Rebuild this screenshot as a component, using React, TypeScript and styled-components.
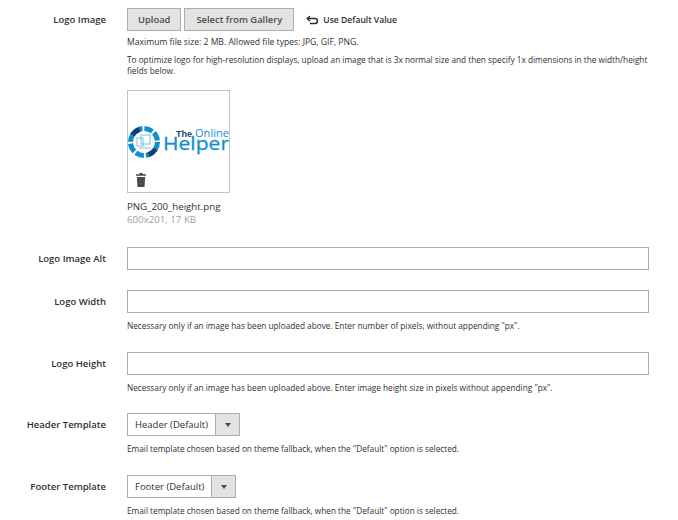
import React from "react";
import styled, { createGlobalStyle } from "styled-components";

const Global = createGlobalStyle`
  html, body { margin: 0; padding: 0; background: #fff; }
  body { font-family: "Open Sans", sans-serif; color: #303030; overflow: hidden; }
  * { box-sizing: border-box; }
`;

const Page = styled.div`
  width: 678px;
  height: 520px;
  padding-top: 8px;
  display: flex;
  flex-direction: column;
  overflow: hidden;
`;

const Row = styled.div<{ $mb: number }>`
  display: grid;
  grid-template-columns: 106px 522px;
  column-gap: 21px;
  margin-bottom: ${(p) => p.$mb}px;
`;

const Label = styled.label`
  font-size: 9.5px;
  font-weight: 600;
  line-height: 14px;
  text-align: right;
  padding-top: 5px;
  color: #303030;
  white-space: nowrap;
`;

const Control = styled.div`
  display: flex;
  flex-direction: column;
  min-width: 0;
`;

const Actions = styled.div`
  display: flex;
  align-items: center;
  height: 23px;
  gap: 3px;
`;

const Button = styled.button<{ $pad: number }>`
  height: 23px;
  padding: 0 ${(p) => p.$pad}px;
  font-family: inherit;
  font-size: 9.4px;
  font-weight: 600;
  color: #514943;
  background: #e3e3e3;
  border: 1px solid #adadad;
  border-radius: 0;
  white-space: nowrap;
`;

const UseDefault = styled.span`
  display: inline-flex;
  align-items: center;
  gap: 4px;
  margin-left: 9px;
  font-size: 8.6px;
  font-weight: 600;
  color: #303030;
  white-space: nowrap;
`;

const Note = styled.p<{ $mt?: number; $size?: number }>`
  margin: ${(p) => p.$mt ?? 0}px 0 0;
  font-size: ${(p) => p.$size ?? 8.25}px;
  line-height: 11px;
  color: #303030;
`;

const Preview = styled.div`
  position: relative;
  width: 103px;
  height: 103px;
  margin-top: 14px;
  border: 1px solid #c4c4c4;
  background: #fff;
  display: flex;
  align-items: center;
`;

const LogoArt = styled.svg`
  display: block;
  width: 101px;
  height: 34px;
`;

const Trash = styled.svg`
  position: absolute;
  left: 8px;
  bottom: 5px;
  width: 10px;
  height: 14px;
`;

const FileName = styled.div`
  margin-top: 8px;
  font-size: 9.7px;
  line-height: 12px;
  color: #303030;
`;

const FileMeta = styled.div`
  margin-top: 1px;
  font-size: 9.7px;
  line-height: 12px;
  color: #a0a0a0;
`;

const Input = styled.input`
  display: block;
  width: 522px;
  height: 23px;
  border: 1px solid #adadad;
  background: #fff;
  padding: 0 7px;
  border-radius: 0;
  outline: none;
`;

const Select = styled.div`
  display: inline-flex;
  align-self: flex-start;
  height: 23px;
  border: 1px solid #adadad;
  background: #fff;
`;

const SelectText = styled.span`
  padding: 0 7px;
  font-size: 9.5px;
  line-height: 21px;
  color: #303030;
  white-space: nowrap;
`;

const SelectArrow = styled.span`
  width: 24px;
  background: #e3e3e3;
  border-left: 1px solid #adadad;
  display: flex;
  align-items: center;
  justify-content: center;
  &::after {
    content: "";
    border-left: 3px solid transparent;
    border-right: 3px solid transparent;
    border-top: 4px solid #514943;
  }
`;

export default function App() {
  return (
    <Page>
      <Global />
      <Row $mb={21}>
        <Label>Logo Image</Label>
        <Control>
          <Actions>
            <Button $pad={10}>Upload</Button>
            <Button $pad={11}>Select from Gallery</Button>
            <UseDefault>
              <svg width="13" height="10" viewBox="0 0 13 10" fill="none" stroke="#303030" strokeWidth="1.5">
                <path d="M4 1.2 1.2 3.6 4 6" />
                <path d="M1.5 3.6H9a2.4 2.4 0 0 1 0 4.9H4" />
              </svg>
              Use Default Value
            </UseDefault>
          </Actions>
          <Note $mt={6} $size={8.6}>Maximum file size: 2 MB. Allowed file types: JPG, GIF, PNG.</Note>
          <Note $mt={6}>
            To optimize logo for high-resolution displays, upload an image that is 3x normal size and then specify 1x dimensions in the width/height fields below.
          </Note>
          <Preview>
            <LogoArt viewBox="0 0 101 34">
              <g fill="none" strokeWidth="5">
                <circle cx="16" cy="17" r="13.5" stroke="#0f8fd0" strokeDasharray="8.6 2" />
                <path d="M4.5 10A13.5 13.5 0 0 1 11.5 4.3" stroke="#123f73" />
                <path d="M27.5 24A13.5 13.5 0 0 1 20.5 29.7" stroke="#123f73" />
              </g>
              <g fill="none" stroke="#5bb5dd" strokeWidth="0.8">
                <rect x="13" y="10" width="9" height="9" />
                <rect x="9" y="13" width="6" height="8" />
                <path d="M11 23h12" />
              </g>
              <text x="48" y="12" fontFamily="Liberation Sans, sans-serif" fontSize="9" fontWeight="700" fill="#123f73" textLength="16" lengthAdjust="spacingAndGlyphs">The</text>
              <text x="67" y="12" fontFamily="Open Sans, sans-serif" fontSize="10.5" fill="#0f8fd0" textLength="34" lengthAdjust="spacingAndGlyphs">Online</text>
              <text x="35" y="25" fontFamily="Open Sans, sans-serif" fontSize="19" fill="#0f8fd0" stroke="#0f8fd0" strokeWidth="0.3" textLength="66" lengthAdjust="spacingAndGlyphs">Helper</text>
            </LogoArt>
            <Trash viewBox="0 0 10 14">
              <path fill="#514943" d="M3.6 0h2.8l.5 1.2H10v1.6H0V1.2h3.1zM.8 4h8.4l-.7 10H1.5z" />
            </Trash>
          </Preview>
          <FileName>PNG_200_height.png</FileName>
          <FileMeta>600x201, 17 KB</FileMeta>
        </Control>
      </Row>
      <Row $mb={20}>
        <Label>Logo Image Alt</Label>
        <Control><Input /></Control>
      </Row>
      <Row $mb={21}>
        <Label>Logo Width</Label>
        <Control>
          <Input />
          <Note $mt={7}>Necessary only if an image has been uploaded above. Enter number of pixels, without appending "px".</Note>
        </Control>
      </Row>
      <Row $mb={20}>
        <Label>Logo Height</Label>
        <Control>
          <Input />
          <Note $mt={7}>Necessary only if an image has been uploaded above. Enter image height size in pixels without appending "px".</Note>
        </Control>
      </Row>
      <Row $mb={21}>
        <Label>Header Template</Label>
        <Control>
          <Select><SelectText>Header (Default)</SelectText><SelectArrow /></Select>
          <Note $mt={7}>Email template chosen based on theme fallback, when the "Default" option is selected.</Note>
        </Control>
      </Row>
      <Row $mb={0}>
        <Label>Footer Template</Label>
        <Control>
          <Select><SelectText>Footer (Default)</SelectText><SelectArrow /></Select>
          <Note $mt={7}>Email template chosen based on theme fallback, when the "Default" option is selected.</Note>
        </Control>
      </Row>
    </Page>
  );
}
